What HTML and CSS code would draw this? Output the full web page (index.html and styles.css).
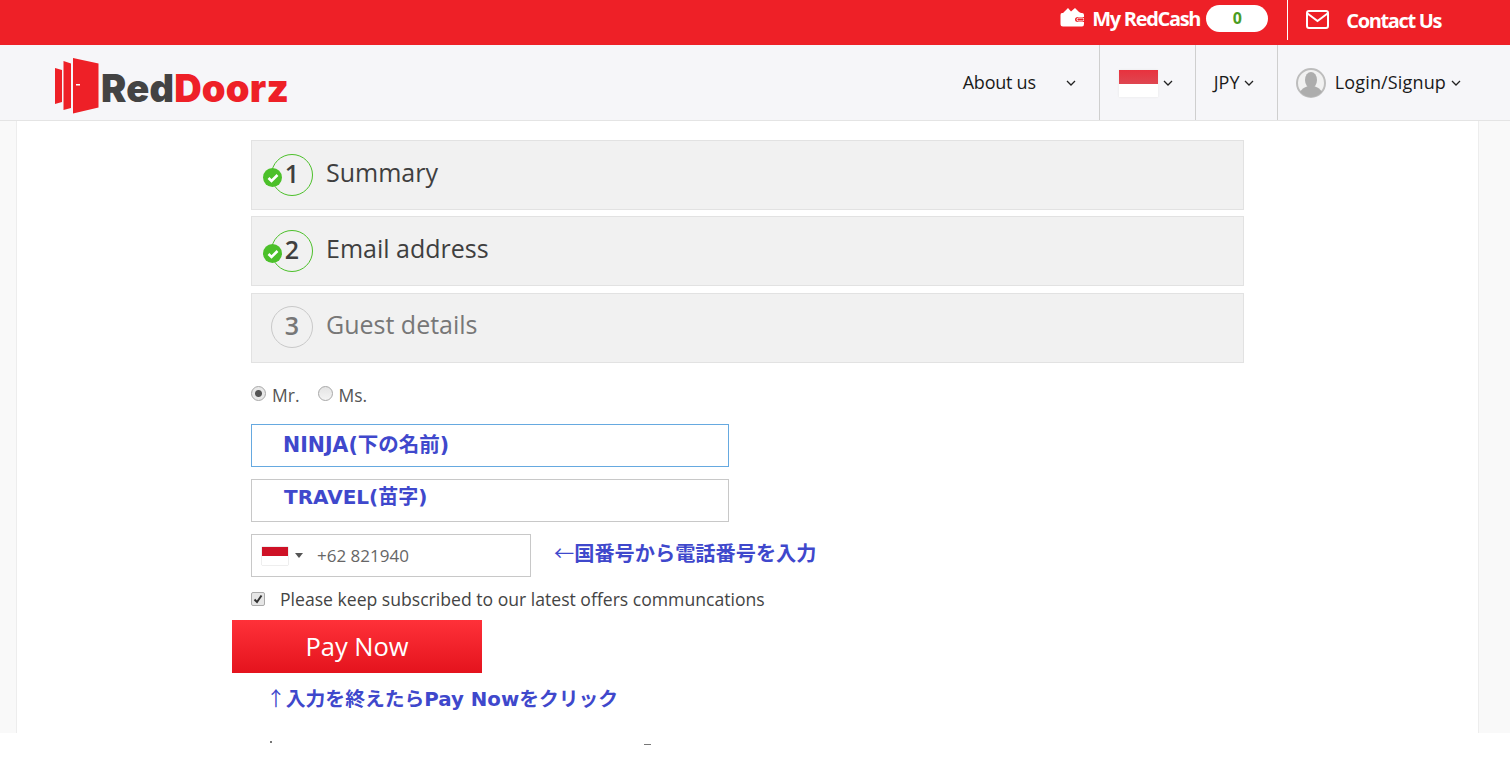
FILE: index.html
```html
<!DOCTYPE html>
<html lang="ja">
<head>
    <meta charset="UTF-8">
    <meta name="viewport" content="width=device-width, initial-scale=1.0">
    <title>RedDoorz Checkout</title>
    <link rel="stylesheet" href="styles.css">
</head>
<body>
    <div class="topbar">
        <svg class="wallet" viewBox="0 0 24 20" width="24" height="20">
            <path d="M3 6 L8 1 L11 4.500 L15 1 L19 5 L21 6 Z" fill="#fff"/>
            <path d="M2 6 H22 Q24 6 24 8 V10 H18 Q15 10 15 12.500 Q15 15 18 15 H24 V17 Q24 19.500 22 19.500 H3 Q0.500 19.500 0.500 17 V8 Q0.500 6 2 6 Z" fill="#fff"/>
            <rect x="17" y="11" width="7" height="3" rx="1.500" fill="none" stroke="#fff"/>
        </svg>
        <span class="redcash">My RedCash</span>
        <span class="pill">0</span>
        <span class="top-divider"></span>
        <svg class="envelope" viewBox="0 0 23 19" width="23" height="19">
            <rect x="1" y="1" width="21" height="17" rx="2" fill="none" stroke="#fff" stroke-width="2"/>
            <path d="M1.500 3.500 L11.500 11 L21.500 3.500" fill="none" stroke="#fff" stroke-width="2"/>
        </svg>
        <span class="contact">Contact Us</span>
    </div>

    <div class="navbar">
        <div class="logo">
            <svg viewBox="0 0 44 56" width="44" height="56">
                <path d="M0 10 L7 12 V44 L0 46 Z" fill="#ee2027"/>
                <path d="M8.500 3 L16 5.500 V50 L8.500 52 Z" fill="#ee2027"/>
                <path d="M18 0 L43.500 5.500 V49.500 L18 55.500 Z" fill="#ee2027"/>
                <rect x="21" y="26" width="4" height="1.500" fill="#fff"/>
            </svg>
            <span class="logo-text"><span class="logo-red-dark">Red</span><span class="logo-doorz">Doorz</span></span>
        </div>
        <div class="nav-items">
            <div class="nav-item nav-about">
                <span class="nav-label">About us</span>
                <svg class="chev chev-about" viewBox="0 0 10 6" width="10" height="6"><path d="M1 1 L5 5 L9 1" fill="none" stroke="#222" stroke-width="1.300"/></svg>
            </div>
            <div class="nav-item nav-flag">
                <span class="nav-flag-img"></span>
                <svg class="chev" viewBox="0 0 10 6" width="10" height="6"><path d="M1 1 L5 5 L9 1" fill="none" stroke="#222" stroke-width="1.300"/></svg>
            </div>
            <div class="nav-item nav-currency">
                <span class="nav-label">JPY</span>
                <svg class="chev" viewBox="0 0 10 6" width="10" height="6"><path d="M1 1 L5 5 L9 1" fill="none" stroke="#222" stroke-width="1.300"/></svg>
            </div>
            <div class="nav-item nav-login">
                <svg class="avatar" viewBox="0 0 30 30" width="30" height="30">
                    <circle cx="15" cy="15" r="14" fill="#f1f1f1" stroke="#bdbdbd" stroke-width="2"/>
                    <ellipse cx="15" cy="12" rx="6" ry="8" fill="#adadad"/>
                    <path d="M4 24 Q6 20 12 18 H18 Q24 20 26 24 Q21 29 15 29 Q9 29 4 24 Z" fill="#adadad"/>
                </svg>
                <span class="nav-label">Login/Signup</span>
                <svg class="chev" viewBox="0 0 10 6" width="10" height="6"><path d="M1 1 L5 5 L9 1" fill="none" stroke="#222" stroke-width="1.300"/></svg>
            </div>
        </div>
    </div>

    <div class="main">
        <div class="content">
            <div class="step step-done">
                <span class="step-num">1<span class="tick"><svg viewBox="0 0 12 10" width="12" height="10"><path d="M1.500 5 L4.500 8 L10.500 2" fill="none" stroke="#fff" stroke-width="2.600"/></svg></span></span>
                <span class="step-title">Summary</span>
            </div>
            <div class="step step-done">
                <span class="step-num">2<span class="tick"><svg viewBox="0 0 12 10" width="12" height="10"><path d="M1.500 5 L4.500 8 L10.500 2" fill="none" stroke="#fff" stroke-width="2.600"/></svg></span></span>
                <span class="step-title">Email address</span>
            </div>
            <div class="step step-active">
                <span class="step-num">3</span>
                <span class="step-title">Guest details</span>
            </div>

            <div class="salutation">
                <span class="radio radio-on"></span><span class="radio-label">Mr.</span>
                <span class="radio"></span><span class="radio-label">Ms.</span>
            </div>

            <div class="field field-focus note">NINJA(下の名前)</div>
            <div class="field note">TRAVEL(苗字)</div>

            <div class="phone-row">
                <div class="phone">
                    <span class="flag"></span>
                    <span class="caret"></span>
                    <span class="phone-num">+62 821940</span>
                </div>
                <span class="note phone-note"><span class="thin-arrow">←</span>国番号から電話番号を入力</span>
            </div>

            <div class="subscribe">
                <span class="checkbox"><svg viewBox="0 0 10 10" width="10" height="10"><path d="M1.500 5.500 L4 8 L8.500 1.500" fill="none" stroke="#333" stroke-width="2"/></svg></span>
                <span>Please keep subscribed to our latest offers communcations</span>
            </div>

            <div class="pay-btn">Pay Now</div>
            <div class="note pay-note"><span class="thin-arrow">↑</span>入力を終えたらPay Nowをクリック</div>
        </div>
    </div>
    <div class="cut-off"><span class="cut-dot"></span><span class="cut-dash"></span></div>
</body>
</html>
```

FILE: styles.css
```css
* {
    box-sizing: border-box;
}
body {
    margin: 0;
    background-color: #fff;
    font-family: "Open Sans", "Noto Sans", sans-serif;
    color: #333;
    overflow: hidden;
}

/* top red bar */
.topbar {
    height: 45px;
    background-color: #ee2027;
    display: flex;
    justify-content: flex-end;
    align-items: flex-start;
    color: #fff;
    padding-right: 69px;
}
.wallet {
    margin-top: 7px;
}
.redcash {
    margin-left: 8px;
    margin-top: 5px;
    font-size: 20px;
    line-height: 27px;
    font-weight: 700;
    letter-spacing: -1.3px;
}
.pill {
    width: 62px;
    height: 27px;
    margin-left: 6px;
    margin-top: 5px;
    background-color: #fff;
    border-radius: 14px;
    color: #4a9d1f;
    font-size: 16px;
    font-weight: 700;
    line-height: 27px;
    text-align: center;
}
.top-divider {
    width: 1px;
    height: 40px;
    margin-left: 19px;
    background-color: #fff;
}
.envelope {
    margin-left: 18px;
    margin-top: 10px;
}
.contact {
    margin-left: 17px;
    margin-top: 7px;
    font-size: 20px;
    line-height: 27px;
    font-weight: 700;
    letter-spacing: -1.35px;
}

/* main nav */
.navbar {
    height: 76px;
    background-color: #f6f6f9;
    border-bottom: 1px solid #e4e4e4;
    display: flex;
    justify-content: space-between;
}
.logo {
    display: flex;
    align-items: flex-start;
    padding-left: 55px;
    padding-top: 13px;
}
.logo-text {
    margin-left: 2px;
    margin-top: 7px;
    font-family: "Inter", sans-serif;
    font-size: 38px;
    line-height: 46px;
    font-weight: 900;
    letter-spacing: 0.2px;
}
.logo-red-dark {
    color: #434343;
}
.logo-doorz {
    color: #ee2027;
}
.nav-items {
    display: flex;
    padding-right: 49px;
    font-size: 18px;
    color: #1a1a1a;
}
.nav-item {
    display: flex;
    align-items: center;
    height: 75px;
    border-left: 1px solid #cfcfcf;
}
.nav-label {
    margin-top: -2px;
}
.nav-about {
    border-left: none;
    width: 137px;
    padding-left: 1px;
    letter-spacing: -0.25px;
}
.chev-about {
    margin-left: 30px;
}
.nav-flag {
    width: 96px;
    padding-left: 19px;
}
.nav-flag-img {
    width: 39px;
    height: 27px;
    margin-top: 2px;
    background: linear-gradient(#e8323e, #df4650 50%, #fff 50%);
    box-shadow: 0 0 2px #e5e5e5;
    margin-right: 5px;
}
.nav-currency {
    width: 82px;
    padding-left: 18px;
}
.nav-currency .chev {
    margin-left: 5px;
}
.nav-login {
    padding-left: 18px;
    letter-spacing: 0.15px;
}
.avatar {
    margin-right: 9px;
}
.nav-login .chev {
    margin-left: 5px;
}

/* page body */
.main {
    height: 612px;
    background-color: #f9f9f9;
    padding: 0 31px 0 16px;
}
.content {
    height: 100%;
    background-color: #fff;
    border-left: 1px solid #ededed;
    border-right: 1px solid #ededed;
    padding: 19px 0 0 234px;
    position: relative;
}
.step {
    width: 993px;
    height: 70px;
    background-color: #f1f1f1;
    border: 1px solid #e2e2e2;
    display: flex;
    align-items: center;
    padding-left: 19px;
    margin-bottom: 6px;
}
.step + .step-active {
    margin-top: 7px;
    margin-bottom: 0;
    padding-bottom: 2px;
}
.step-num {
    width: 42px;
    height: 42px;
    border-radius: 50%;
    border: 1px solid #c9c9c9;
    font-size: 25px;
    font-weight: 600;
    line-height: 36px;
    text-align: center;
    color: #777;
    position: relative;
}
.step-done .step-num {
    border-color: #4cc02a;
    color: #3f3f3f;
}
.tick {
    position: absolute;
    left: -9px;
    top: 13px;
    width: 19px;
    height: 19px;
    border-radius: 50%;
    background-color: #4cc02a;
    display: flex;
    align-items: center;
    justify-content: center;
}
.step-title {
    margin-left: 13px;
    margin-top: -6px;
    font-size: 25px;
    color: #777;
}
.step-done .step-title {
    color: #3f3f3f;
}

/* guest form */
.salutation {
    display: flex;
    align-items: center;
    height: 24px;
    margin-top: 20px;
    font-size: 17.500px;
    color: #555;
}
.radio {
    width: 15px;
    height: 15px;
    border-radius: 50%;
    border: 1px solid #a8a8a8;
    background: linear-gradient(#e4e4e4, #f4f4f4);
    margin-top: -4px;
}
.radio-on {
    background: radial-gradient(circle, #555 0, #555 3px, #e8e8e8 4px);
}
.radio-label {
    margin-left: 6px;
    margin-right: 18px;
}
.note {
    font-family: "DejaVu Sans", "Noto Sans CJK JP", sans-serif;
    font-weight: 700;
    color: #3f48cc;
}
.field {
    width: 478px;
    height: 43px;
    border: 1px solid #c8c8c8;
    margin-top: 12px;
    padding-left: 32px;
    font-size: 20px;
    line-height: 35px;
}
.field-focus {
    border-color: #66a9e0;
    margin-top: 17px;
    padding-left: 31px;
    font-size: 20.500px;
    line-height: 41px;
}
.phone-row {
    display: flex;
    align-items: center;
    margin-top: 12px;
}
.phone {
    width: 280px;
    height: 43px;
    border: 1px solid #c8c8c8;
    display: flex;
    align-items: center;
    padding-left: 10px;
    font-size: 17px;
    color: #666;
}
.flag {
    width: 26px;
    height: 18px;
    background: linear-gradient(#ce1126 50%, #fff 50%);
    box-shadow: 0 0 1px #999;
}
.caret {
    width: 0;
    height: 0;
    border-left: 4px solid transparent;
    border-right: 4px solid transparent;
    border-top: 5px solid #555;
    margin-left: 7px;
}
.phone-num {
    margin-left: 14px;
}
.phone-note {
    margin-left: 23px;
    margin-top: -6px;
    font-size: 20.200px;
}
.thin-arrow {
    font-family: "Noto Sans CJK JP", sans-serif;
    font-weight: 400;
}
.subscribe {
    display: flex;
    align-items: center;
    height: 24px;
    margin-top: 10px;
    font-size: 17.600px;
    color: #444;
}
.checkbox {
    width: 14px;
    height: 14px;
    border: 1px solid #aaa;
    border-radius: 2px;
    background-color: #e6e6e6;
    display: flex;
    align-items: center;
    justify-content: center;
    margin-right: 15px;
}
.pay-btn {
    width: 250px;
    height: 53px;
    margin-top: 9px;
    margin-left: -19px;
    background: linear-gradient(#ff3139, #e4131d);
    color: #fff;
    font-size: 25.500px;
    line-height: 53px;
    text-align: center;
}
.pay-note {
    margin-top: 10px;
    margin-left: 15px;
    font-size: 19.800px;
    line-height: 30px;
}

/* bits of the next line that peek out under the white block */
.cut-off {
    position: absolute;
    left: 0;
    top: 733px;
    width: 100%;
}
.cut-dot {
    position: absolute;
    left: 270px;
    top: 8px;
    width: 2px;
    height: 2px;
    background-color: #777;
}
.cut-dash {
    position: absolute;
    left: 644px;
    top: 11px;
    width: 7px;
    height: 1px;
    background-color: #777;
}
```
